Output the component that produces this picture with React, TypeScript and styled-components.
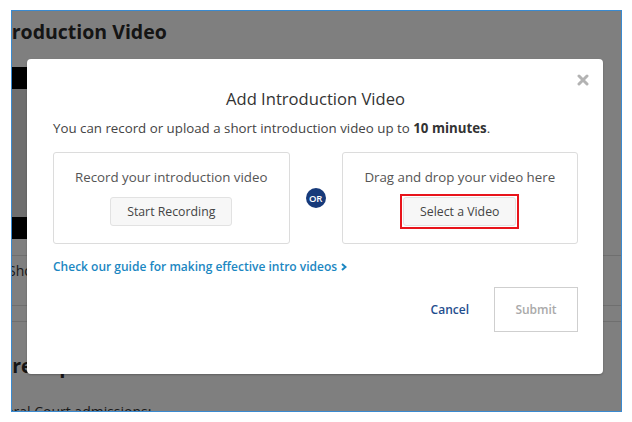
import React from "react";
import styled, { createGlobalStyle } from "styled-components";

const GlobalStyle = createGlobalStyle`
  html, body { margin: 0; padding: 0; background: #ffffff; }
  body { font-family: "Open Sans", "Liberation Sans", sans-serif; }
  * { box-sizing: border-box; }
`;

const Page = styled.div`
  width: 632px;
  height: 422px;
  padding: 10px 0 0 11px;
`;

const Frame = styled.div`
  position: relative;
  width: 611px;
  height: 402px;
  border: 1px solid #3a8ad0;
  overflow: hidden;
  background: #ffffff;
`;

/* ---------- page underneath the overlay ---------- */
const Under = styled.div`
  display: flex;
  flex-direction: column;
  color: #2a2a2a;
`;

const UnderHeading = styled.h1<{ $offset: number; $top: number }>`
  margin: ${(p) => p.$top}px 0 0 ${(p) => p.$offset}px;
  font-family: "Open Sans", sans-serif;
  font-size: 19.5px;
  font-weight: 700;
  line-height: 22px;
  white-space: nowrap;
`;

const VideoBlock = styled.div`
  margin-top: 24px;
  width: 330px;
  display: flex;
  flex-direction: column;
`;

const VideoBar = styled.div`
  height: 22px;
  background: #000;
`;

const VideoArea = styled.div`
  height: 128px;
  background: #dcdcdc;
`;

const UnderRule = styled.div<{ $top: number }>`
  margin-top: ${(p) => p.$top}px;
  height: 1px;
  background: #dedede;
`;

const UnderText = styled.div<{ $top: number; $offset: number }>`
  margin: ${(p) => p.$top}px 0 0 ${(p) => p.$offset}px;
  font-size: 14px;
  line-height: 18px;
  white-space: nowrap;
  color: #333;
`;

/* ---------- overlay + modal ---------- */
const Overlay = styled.div`
  position: absolute;
  inset: 0;
  background: rgba(0, 0, 0, 0.5);
  padding: 48px 0 0 15px;
`;

const Modal = styled.div`
  position: relative;
  width: 576px;
  height: 315px;
  background: #fff;
  border-radius: 4px;
  box-shadow: 0 1px 2px rgba(0, 0, 0, 0.25);
  padding: 29px 25px 0 26px;
  display: flex;
  flex-direction: column;
  color: #444;
`;

const Close = styled.button`
  position: absolute;
  top: 15px;
  right: 14px;
  width: 12px;
  height: 12px;
  padding: 0;
  border: 0;
  background: none;
  display: flex;
`;

const Title = styled.h2`
  margin: 0;
  text-align: center;
  font-size: 16.6px;
  font-weight: 400;
  line-height: 22px;
  color: #333;
`;

const Lead = styled.p`
  margin: 9px 0 0;
  font-size: 13.3px;
  line-height: 18px;
  color: #444;
  b { font-weight: 700; color: #333; }
`;

const Options = styled.div`
  margin-top: 15px;
  display: grid;
  grid-template-columns: 1fr 20px 1fr;
  column-gap: 16px;
  align-items: center;
`;

const OptionBox = styled.div`
  height: 92px;
  border: 1px solid #dcdcdc;
  border-radius: 3px;
  display: flex;
  flex-direction: column;
  align-items: center;
  padding-top: 15px;
  gap: 11px;
`;

const OptionText = styled.div`
  font-size: 13.3px;
  line-height: 18px;
  color: #555;
`;

const Highlight = styled.div<{ $on?: boolean }>`
  display: flex;
  padding: 1px;
  margin: -3px;
  border: 2px solid ${(p) => (p.$on ? "#e8141b" : "transparent")};
`;

const GhostButton = styled.button`
  height: 29px;
  padding: 0 16px;
  background: #f7f7f7;
  border: 1px solid #e2e2e2;
  border-radius: 3px;
  font-family: inherit;
  font-size: 12.3px;
  color: #444;
`;

const OrBadge = styled.div`
  width: 20px;
  height: 20px;
  border-radius: 50%;
  background: #173a7a;
  color: #fff;
  font-size: 9.5px;
  font-weight: 600;
  letter-spacing: -0.2px;
  display: flex;
  align-items: center;
  justify-content: center;
`;

const GuideLink = styled.a`
  margin-top: 14px;
  align-self: flex-start;
  font-size: 12px;
  font-weight: 600;
  line-height: 18px;
  color: #1b87c2;
  text-decoration: none;
  display: flex;
  align-items: center;
  gap: 4px;
`;

const Footer = styled.div`
  margin-top: 11px;
  display: flex;
  justify-content: flex-end;
  align-items: center;
  gap: 25px;
`;

const CancelLink = styled.a`
  font-size: 12px;
  font-weight: 600;
  color: #1f4e8e;
`;

const SubmitButton = styled.button`
  width: 84px;
  height: 45px;
  background: #fff;
  border: 1px solid #cfcfcf;
  border-radius: 0;
  font-family: inherit;
  font-size: 12px;
  font-weight: 600;
  color: #aaa;
`;

export default function App() {
  return (
    <>
      <GlobalStyle />
      <Page>
        <Frame>
          <Under>
            <UnderHeading $offset={-28} $top={10}>Introduction Video</UnderHeading>
            <VideoBlock>
              <VideoBar />
              <VideoArea />
              <VideoBar />
            </VideoBlock>
            <UnderRule $top={16} />
            <UnderText $top={6} $offset={-4}>Show this video on my profile</UnderText>
            <UnderRule $top={25} />
            <UnderRule $top={15} />
            <UnderHeading $offset={-12} $top={33}>Prerequisites</UnderHeading>
            <UnderText $top={26} $offset={-30}>Federal Court admissions:</UnderText>
          </Under>
          <Overlay>
            <Modal>
              <Close aria-label="Close">
                <svg width="12" height="12" viewBox="0 0 12 12">
                  <path d="M2 2 L10 10 M10 2 L2 10" stroke="#b3b3b3" strokeWidth="3" strokeLinecap="round" />
                </svg>
              </Close>
              <Title>Add Introduction Video</Title>
              <Lead>
                You can record or upload a short introduction video up to <b>10 minutes</b>.
              </Lead>
              <Options>
                <OptionBox>
                  <OptionText>Record your introduction video</OptionText>
                  <Highlight>
                    <GhostButton>Start Recording</GhostButton>
                  </Highlight>
                </OptionBox>
                <OrBadge>OR</OrBadge>
                <OptionBox>
                  <OptionText>Drag and drop your video here</OptionText>
                  <Highlight $on>
                    <GhostButton>Select a Video</GhostButton>
                  </Highlight>
                </OptionBox>
              </Options>
              <GuideLink href="#">
                Check our guide for making effective intro videos
                <svg width="6" height="8" viewBox="0 0 6 8">
                  <path d="M1 1 L4.5 4 L1 7" stroke="#1b87c2" strokeWidth="2" fill="none" />
                </svg>
              </GuideLink>
              <Footer>
                <CancelLink>Cancel</CancelLink>
                <SubmitButton>Submit</SubmitButton>
              </Footer>
            </Modal>
          </Overlay>
        </Frame>
      </Page>
    </>
  );
}
